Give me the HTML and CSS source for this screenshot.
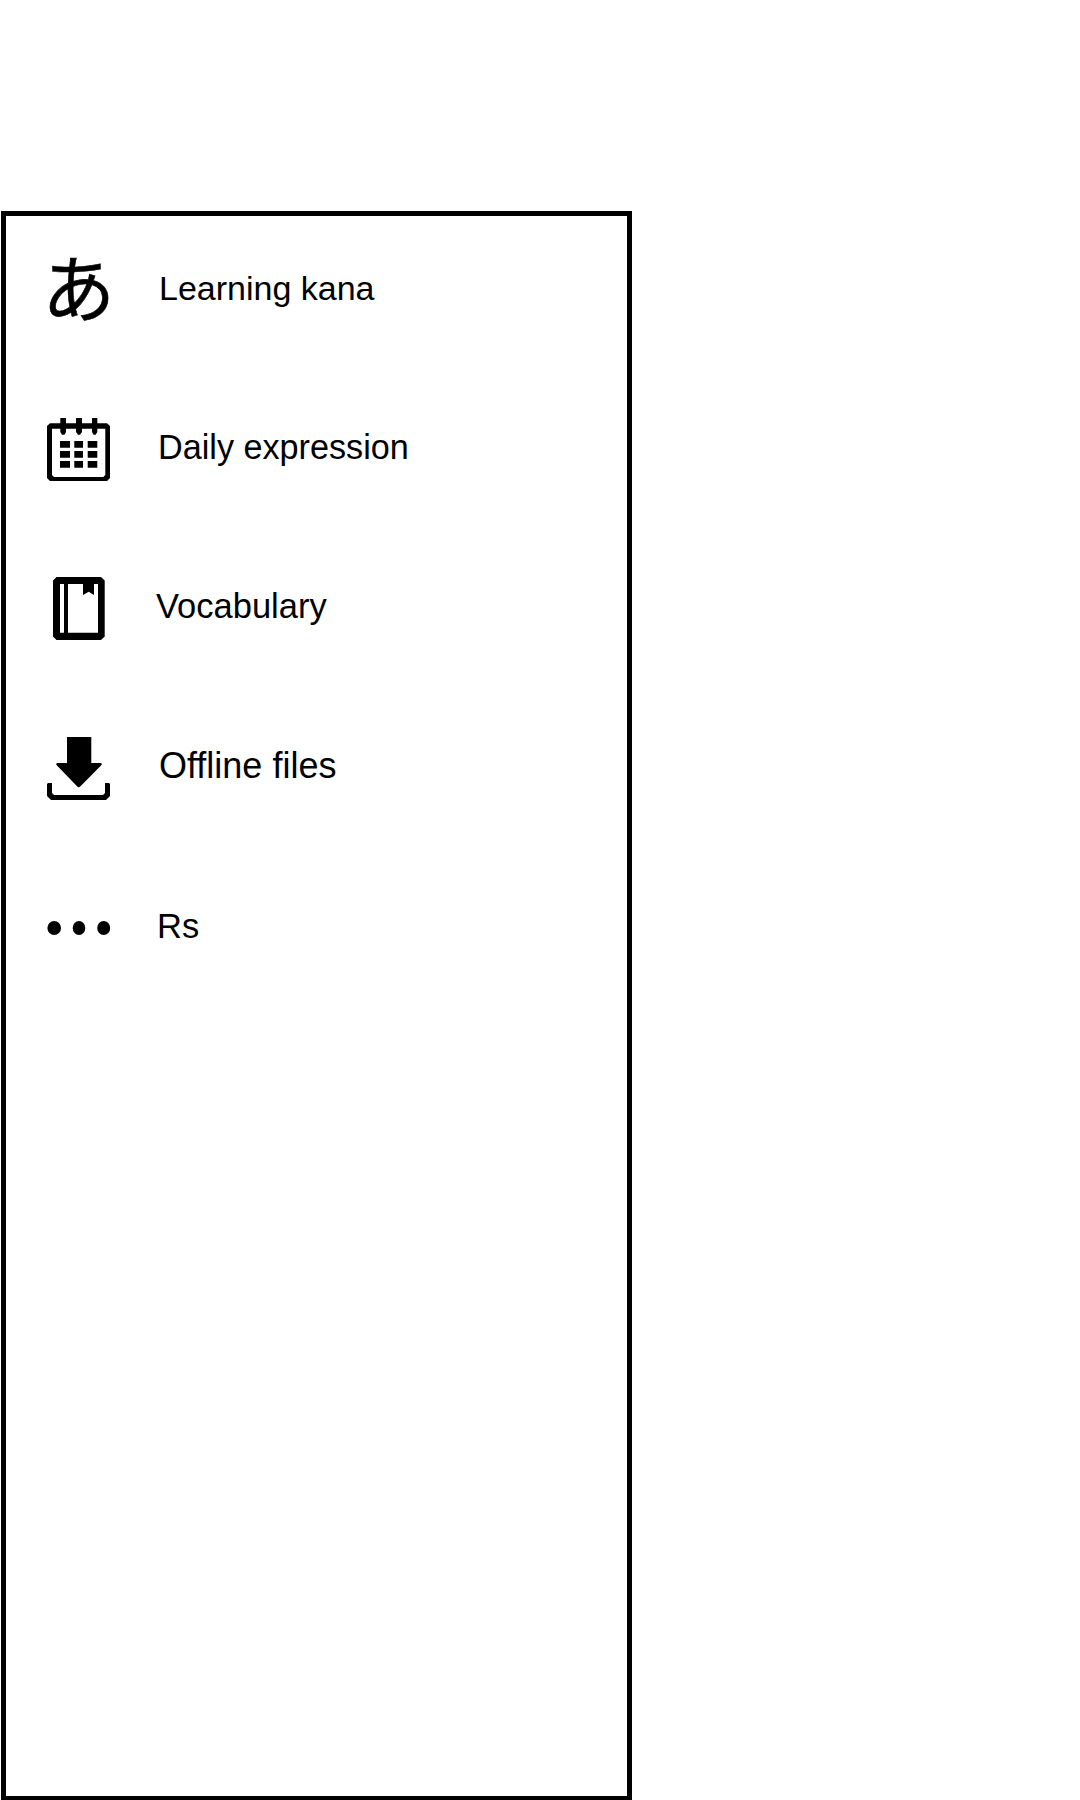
FILE: index.html
```html
<!DOCTYPE html>
<html lang="en">
<head>
<meta charset="utf-8">
<title>Menu</title>
<link rel="stylesheet" href="styles.css">
</head>
<body>
<nav class="drawer">
  <a class="item kana">
    <span class="icon glyph" lang="ja">あ</span>
    <span class="label">Learning kana</span>
  </a>
  <a class="item daily">
    <svg class="icon" viewBox="0 0 65 64">
      <path fill-rule="evenodd" d="M4 6.3H61L64 9V61L61 64H4L1 61V9ZM6 11.7V58L8 60H57.3L59.3 58V11.7Z"/>
      <path d="M14.3 1H20V15L18.5 17.7H16L14.3 15ZM30 1H36V15L34 17.7H32L30 15ZM46 1H51.3V15L49.7 17.7H47.5L46 15Z"/>
      <path d="M14 24H24V30.7H14ZM28.3 24H37V30.7H28.3ZM41.7 24H51.3V30.7H41.7ZM14 34H24V40.7H14ZM28.3 34H37V40.7H28.3ZM41.7 34H51.3V40.7H41.7ZM14 44H24V50.7H14ZM28.3 44H37V50.7H28.3ZM41.7 44H51.3V50.7H41.7Z"/>
    </svg>
    <span class="label">Daily expression</span>
  </a>
  <a class="item vocabulary">
    <svg class="icon" viewBox="0 0 65 64">
      <path fill-rule="evenodd" d="M10.500 0H55L58.700 3.500V59.500L55 63H10.500L7 59.500V3.500ZM14 7V55.700H18V7ZM22 7V55.700H52V7H48V18L42.700 14.700L37 18V7Z"/>
    </svg>
    <span class="label">Vocabulary</span>
  </a>
  <a class="item offline">
    <svg class="icon" viewBox="0 0 65 64">
      <path d="M21 0H45.300V26H54Q57 26 55 28.500L34.500 49.300Q32.700 51 31 49.300L11 28.500Q9 26 12 26H21Z"/>
      <path d="M1 47L2 46H6V56L8 58H57L59 56V46H63L64 47V59L60 63H5L1 59Z"/>
    </svg>
    <span class="label">Offline files</span>
  </a>
  <a class="item rs">
    <svg class="icon" viewBox="0 0 65 64">
      <ellipse cx="8.200" cy="31" rx="6.800" ry="7"/>
      <ellipse cx="33" cy="31" rx="6.300" ry="7"/>
      <ellipse cx="57.700" cy="31" rx="6.500" ry="7"/>
    </svg>
    <span class="label">Rs</span>
  </a>
</nav>
</body>
</html>
```
FILE: styles.css
```css
body {
  margin: 0;
  height: 1800px;
  overflow: hidden;
  background: #fff;
  color: #000;
  font-family: "Liberation Sans", Arial, sans-serif;
}

.drawer {
  box-sizing: border-box;
  width: 631px;
  height: 1590px;
  margin: 211px 0 0 1px;
  padding: 41px 0 0 40px;
  border: 5px solid #000;
  display: flex;
  flex-direction: column;
  gap: 96px;
}

.item {
  display: flex;
  height: 64px;
}

.icon {
  flex: none;
  width: 65px;
  height: 64px;
}

.glyph {
  font: 400 73px/54px "Noto Sans CJK JP", sans-serif;
  text-indent: -4px;
  -webkit-text-stroke: 0.6px #000;
}

.label {
  font-size: 34.2px;
  line-height: 40px;
  white-space: nowrap;
  padding: 10px 0 0 47px;
}

.kana .label {
  font-size: 34px;
  padding: 11px 0 0 48px;
}

.vocabulary .label {
  font-size: 34.5px;
  padding: 9px 0 0 45px;
}

.offline .label {
  font-size: 36px;
  padding: 9px 0 0 48px;
}

.rs .label {
  font-size: 34.5px;
  padding: 9px 0 0 46px;
}
```
